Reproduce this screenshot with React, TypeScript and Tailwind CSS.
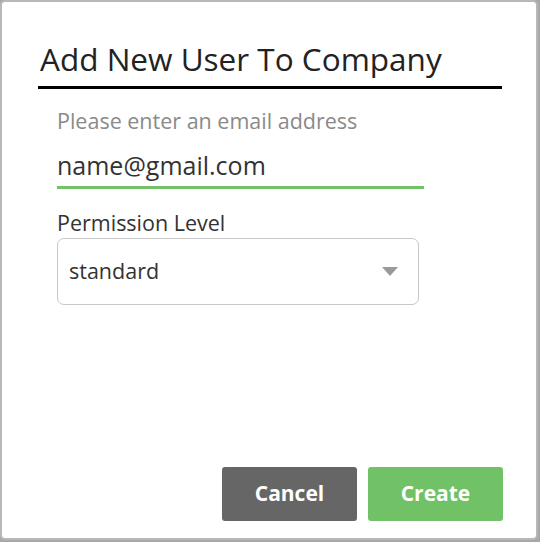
export default function App() {
  return (
    <div className="h-[542px] w-[540px] bg-[#a8a8a8] p-0" style={{ fontFamily: '"Open Sans", "Liberation Sans", sans-serif' }}>
      <div className="flex h-[540px] w-[538px] flex-col rounded-[5px] border-2 border-[#b8b8b8] bg-white">
        <div className="ml-[36px] mr-[34px] mt-[38px] border-b-[3px] border-black pb-[8px] pl-[2px]">
          <h1 className="text-[31.5px] leading-[38px] text-[#222]">Add New User To Company</h1>
        </div>

        <div className="ml-[55px] mt-[18px] w-[367px]">
          <div className="text-[21.5px] leading-[28px] text-[#8a8a8a]">Please enter an email address</div>
          <div className="mt-[13px] border-b-[3px] border-[#72c267] pb-[4px] text-[25px] leading-[34px] text-[#333]">
            name@gmail.com
          </div>
        </div>

        <div className="ml-[55px] mt-[20px]">
          <div className="text-[21.5px] leading-[28px] text-[#333]">Permission Level</div>
          <div className="mt-[1px] flex h-[67px] w-[362px] items-center justify-between rounded-[7px] border border-[#c8c8c8] pl-[11px] pr-[20px]">
            <span className="text-[21.5px] text-[#333]">standard</span>
            <svg width="16" height="9" viewBox="0 0 16 9">
              <path d="M0 0 L16 0 L8 9 Z" fill="#9a9a9a" />
            </svg>
          </div>
        </div>

        <div className="mt-auto mb-[17px] mr-[33px] flex justify-end gap-[11px]">
          <button className="h-[54px] w-[135px] rounded-[3px] bg-[#666666] text-[21px] font-bold text-white">Cancel</button>
          <button className="h-[54px] w-[135px] rounded-[3px] bg-[#71c166] text-[21px] font-bold text-white">Create</button>
        </div>
      </div>
    </div>
  );
}
